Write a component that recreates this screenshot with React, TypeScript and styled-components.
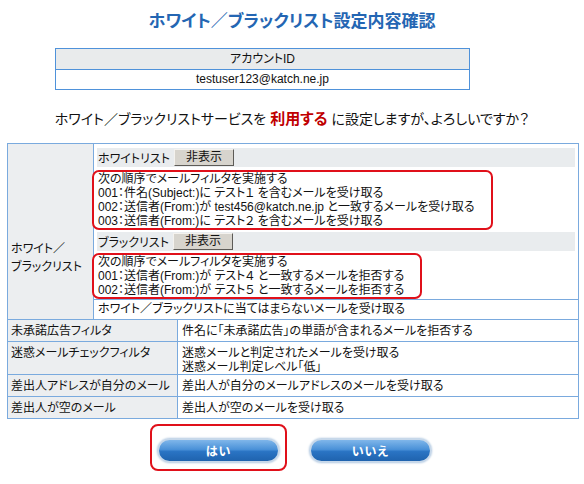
import React from 'react';
import styled, { createGlobalStyle } from 'styled-components';

const GlobalStyle = createGlobalStyle`
  html, body {
    margin: 0;
    padding: 0;
    background: #ffffff;
  }
  body {
    font-family: "Liberation Sans", "Noto Sans CJK JP", sans-serif;
    font-feature-settings: "palt";
    color: #111;
    font-size: 12px;
  }
`;

const BORDER = '#7aaade';

const Page = styled.div`
  width: 584px;
  padding-top: 11px;
  padding-bottom: 14px;
`;

const Title = styled.h1`
  margin: 0;
  font-size: 17px;
  line-height: 22px;
  font-weight: 700;
  color: #2466b3;
  text-align: center;
`;

const AccountTable = styled.div`
  width: 413px;
  margin: 15px 0 0 55px;
  border: 1px solid #4f92da;
  text-align: center;
`;

const AccountHead = styled.div`
  height: 20px;
  line-height: 20px;
  background: #e9ebec;
  border-bottom: 1px solid #4f92da;
`;

const AccountValue = styled.div`
  height: 19px;
  line-height: 19px;
  background: #fff;
`;

const Confirm = styled.p`
  margin: 19px 0 0;
  font-size: 14px;
  line-height: 20px;
  text-align: center;
`;

const Strong = styled.span`
  color: #c00000;
  font-weight: 700;
  font-size: 15px;
  margin: 0 4px;
`;

const MainTable = styled.div`
  width: 570px;
  margin: 14px 0 0 7px;
  border: 1px solid ${BORDER};
`;

const Row = styled.div<{ $h?: number }>`
  display: flex;
  min-height: ${({ $h }) => ($h ? `${$h}px` : 'auto')};
  & + & {
    border-top: 1px solid ${BORDER};
  }
`;

const Label = styled.div<{ $w: number }>`
  flex: 0 0 ${({ $w }) => $w}px;
  background: #eceef0;
  border-right: 1px solid ${BORDER};
  padding: 4px 0 0 3px;
  box-sizing: border-box;
  line-height: 14px;
`;

const ListLabel = styled(Label)`
  padding-top: 96px;
  line-height: 18px;
`;

const Value = styled.div`
  flex: 1;
  padding: 4px 0 0 4px;
  line-height: 14px;
  background: #fff;
`;

const ListCol = styled.div`
  flex: 1;
  display: flex;
  flex-direction: column;
`;

const ListInner = styled.div`
  padding: 4px 3px 0;
`;

const ListHead = styled.div<{ $gap?: number }>`
  display: flex;
  align-items: center;
  height: 19px;
  margin-top: ${({ $gap }) => $gap ?? 0}px;
  padding-left: 1px;
  background: #e9ecee;
`;

const HideButton = styled.button`
  margin-left: 4px;
  width: 60px;
  height: 17px;
  padding: 0;
  font: inherit;
  font-size: 12px;
  line-height: 15px;
  color: #111;
  background: #d7d4cd;
  border: 1px solid;
  border-color: #f4f2ee #5d5b57 #5d5b57 #f4f2ee;
`;

const RuleBox = styled.div<{ $gap: number }>`
  width: fit-content;
  margin: ${({ $gap }) => $gap}px 0 0 -5px;
  padding: 0 16px 0 4px;
  border: 2px solid #e0101a;
  border-radius: 7px;
  line-height: 14px;
`;

const Fallthrough = styled.div`
  border-top: 1px solid ${BORDER};
  height: 19px;
  line-height: 19px;
  padding-left: 4px;
`;

const Buttons = styled.div`
  display: flex;
  justify-content: center;
  gap: 15px;
  margin-top: 5px;
  padding-left: 5px;
`;

const ButtonFrame = styled.div<{ $marked?: boolean }>`
  padding: 12px 5px 6px;
  border: 2px solid ${({ $marked }) => ($marked ? '#e0101a' : 'transparent')};
  border-radius: 8px;
`;

const PillButton = styled.button`
  display: block;
  width: 123px;
  height: 25px;
  padding: 0;
  border-radius: 13px;
  border: 2px solid #c7d8ea;
  background: linear-gradient(#7fb6ea 0%, #4a91d8 45%, #2a74c4 55%, #1f63ae 100%);
  box-shadow: 0 0 2px #aac3dd;
  color: #fff;
  font: inherit;
  font-size: 12px;
  font-weight: 700;
  letter-spacing: 1px;
`;

const whitelist: string[] = [
  '次の順序でメールフィルタを実施する',
  '001：件名(Subject:)に テスト１ を含むメールを受け取る',
  '002：送信者(From:)が test456@katch.ne.jp と一致するメールを受け取る',
  '003：送信者(From:)に テスト２ を含むメールを受け取る',
];

const blacklist: string[] = [
  '次の順序でメールフィルタを実施する',
  '001：送信者(From:)が テスト４ と一致するメールを拒否する',
  '002：送信者(From:)が テスト５ と一致するメールを拒否する',
];

const otherRows: { label: string; lines: string[]; h: number }[] = [
  { label: '未承諾広告フィルタ', lines: ['件名に「未承諾広告」の単語が含まれるメールを拒否する'], h: 21 },
  {
    label: '迷惑メールチェックフィルタ',
    lines: ['迷惑メールと判定されたメールを受け取る', '迷惑メール判定レベル「低」'],
    h: 32,
  },
  { label: '差出人アドレスが自分のメール', lines: ['差出人が自分のメールアドレスのメールを受け取る'], h: 21 },
  { label: '差出人が空のメール', lines: ['差出人が空のメールを受け取る'], h: 21 },
];

const App: React.FC = () => (
  <>
    <GlobalStyle />
    <Page>
      <Title>ホワイト／ブラックリスト設定内容確認</Title>

      <AccountTable>
        <AccountHead>アカウントID</AccountHead>
        <AccountValue>testuser123@katch.ne.jp</AccountValue>
      </AccountTable>

      <Confirm>
        ホワイト／ブラックリストサービスを<Strong>利用する</Strong>に設定しますが、よろしいですか？
      </Confirm>

      <MainTable>
        <Row $h={175}>
          <ListLabel $w={86}>
            ホワイト／
            <br />
            ブラックリスト
          </ListLabel>
          <ListCol>
            <ListInner>
              <ListHead>
                ホワイトリスト<HideButton>非表示</HideButton>
              </ListHead>
              <RuleBox $gap={3}>
                {whitelist.map((l) => (
                  <div key={l}>{l}</div>
                ))}
              </RuleBox>
              <ListHead $gap={2}>
                ブラックリスト<HideButton>非表示</HideButton>
              </ListHead>
              <RuleBox $gap={2}>
                {blacklist.map((l) => (
                  <div key={l}>{l}</div>
                ))}
              </RuleBox>
            </ListInner>
            <Fallthrough>ホワイト／ブラックリストに当てはまらないメールを受け取る</Fallthrough>
          </ListCol>
        </Row>
        {otherRows.map((r) => (
          <Row key={r.label} $h={r.h}>
            <Label $w={170}>{r.label}</Label>
            <Value>
              {r.lines.map((l) => (
                <div key={l}>{l}</div>
              ))}
            </Value>
          </Row>
        ))}
      </MainTable>

      <Buttons>
        <ButtonFrame $marked>
          <PillButton>はい</PillButton>
        </ButtonFrame>
        <ButtonFrame>
          <PillButton>いいえ</PillButton>
        </ButtonFrame>
      </Buttons>
    </Page>
  </>
);

export default App;
